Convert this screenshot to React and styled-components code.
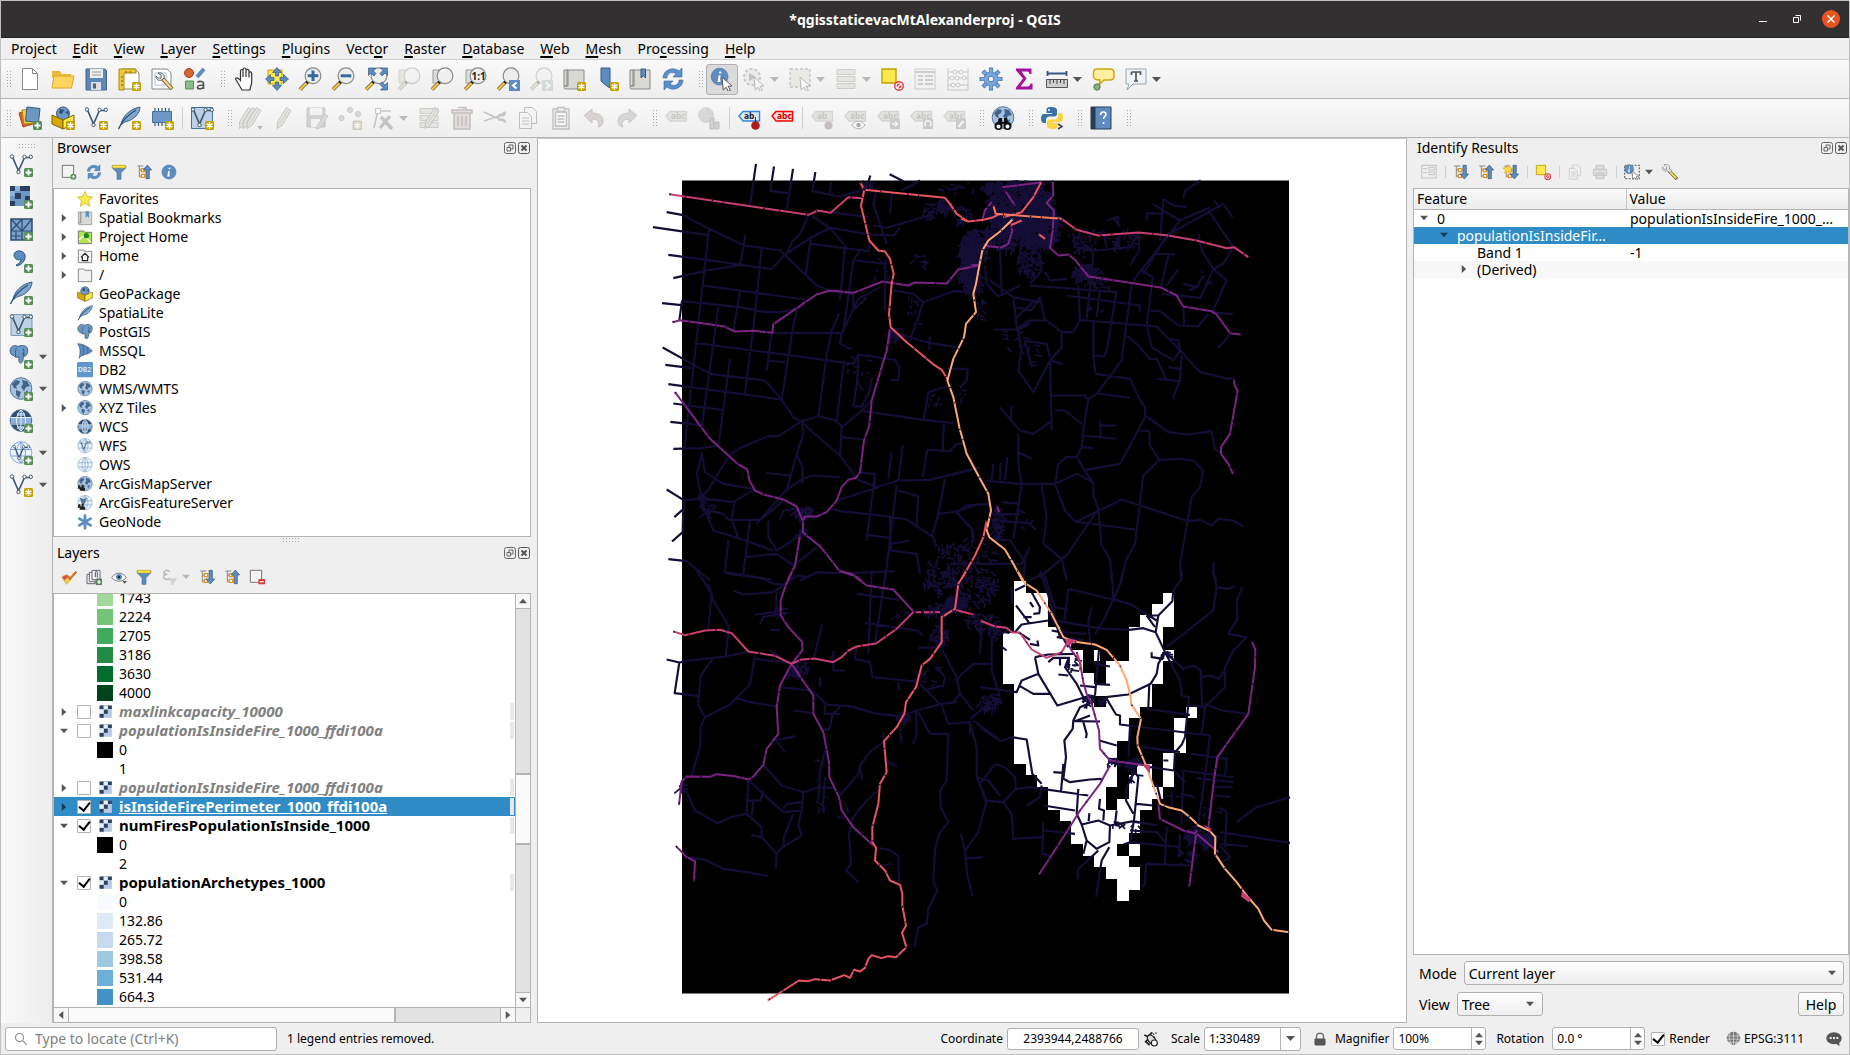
import React from 'react';
import styled, { createGlobalStyle, css } from 'styled-components';

const Global = createGlobalStyle`
  * { box-sizing: border-box; }
  body { margin: 0; background: #efefef; }
  body, button, input, select, table {
    font-family: "Noto Sans", "Open Sans", sans-serif;
    font-size: 14px;
    color: #000;
  }
  ul { list-style: none; margin: 0; padding: 0; }
  button { padding: 0; border: 0; background: none; }
`;

/* ---------- window frame ---------- */

const Window = styled.div`
  height: 100vh;
  display: flex;
  flex-direction: column;
  border: 1px solid #bfbfbf;
  background: #efefef;
  overflow: hidden;
`;

const TitleBar = styled.header`
  flex: none;
  height: 37px;
  display: grid;
  grid-template-columns: 1fr auto 1fr;
  align-items: center;
  background: #323030;
  border-bottom: 1px solid #1f1f1f;
`;

const WindowTitle = styled.h1`
  grid-column: 2;
  margin: 0;
  font-size: 14px;
  font-weight: 700;
  color: #fff;
`;

const WindowButtons = styled.div`
  display: flex;
  justify-content: flex-end;
  align-items: center;
  gap: 16px;
  padding-right: 9px;
`;

const WindowButton = styled.button`
  width: 18px;
  height: 18px;
  display: grid;
  place-items: center;
  border-radius: 9px;
  background: ${(p) => (p.$close ? '#e95420' : 'transparent')};
`;

const MenuBar = styled.nav`
  flex: none;
  height: 22px;
  display: flex;
  align-items: center;
  padding-left: 2px;
  border-bottom: 1px solid #d0d0d0;
`;

const MenuItem = styled.button`
  padding: 0 8px;
  line-height: 20px;
  u { text-decoration-thickness: 2px; text-underline-offset: 2px; }
`;

/* ---------- toolbars ---------- */

const Toolbar = styled.div`
  flex: none;
  height: 39px;
  display: flex;
  align-items: center;
  padding-left: 3px;
  border-bottom: 1px solid #b4b4b4;
  background: linear-gradient(#f9f9f9, #eeeeee);
`;

const Group = styled.div`
  display: flex;
  align-items: center;
  margin-right: 6px;
`;

const Grip = styled.span`
  flex: none;
  width: 10px;
  height: 18px;
  background: radial-gradient(circle, #a9a9a9 0 1px, transparent 1px) 2px 0 / 3px 3px;
  background-clip: content-box;
  padding: 0 2px;
  ${(p) => p.$wide && css`width: 18px; height: 6px; padding: 0;`}
`;

const Separator = styled.span`
  flex: none;
  width: 1px;
  height: ${(p) => (p.$small ? '12px' : '22px')};
  margin: 0 3px;
  background: #d0d0d0;
`;

const ToolButton = styled.button`
  flex: none;
  width: ${(p) => (p.$menu ? '46px' : '33px')};
  height: 31px;
  display: flex;
  align-items: center;
  gap: 4px;
  padding-left: 4px;
  border-radius: 3px;
  ${(p) => p.$pressed && css`
    width: 32px;
    padding-left: 3px;
    border: 1px solid #b0b0b0;
    background: #dadada;
  `}
  &:disabled { opacity: 0.36; filter: grayscale(0.7); }
`;

const SideBar = styled.div`
  flex: none;
  width: 52px;
  display: flex;
  flex-direction: column;
  padding: 5px 0 0 5px;
  border-right: 1px solid #b4b4b4;
  background: linear-gradient(90deg, #f9f9f9, #ededed);
`;

const SideGrip = styled.div`
  height: 6px;
  padding-left: 13px;
  display: flex;
`;

const SideButton = styled.button`
  width: 44px;
  height: 32px;
  display: flex;
  align-items: center;
  gap: 6px;
  padding-left: 3px;
`;

const SmallButton = styled.button`
  flex: none;
  width: ${(p) => (p.$menu ? '38px' : '25px')};
  height: 24px;
  display: flex;
  align-items: center;
  gap: 5px;
  padding-left: 4px;
  &:disabled { opacity: 0.35; filter: grayscale(1); }
`;

/* ---------- docks ---------- */

const Main = styled.main`
  flex: 1;
  min-height: 0;
  display: flex;
`;

const LeftDocks = styled.div`
  flex: none;
  width: 484px;
  display: flex;
  flex-direction: column;
  padding-right: 6px;
`;

const RightDock = styled.section`
  flex: none;
  width: 442px;
  display: flex;
  flex-direction: column;
  padding-left: 6px;
`;

const Dock = styled.section`
  display: flex;
  flex-direction: column;
  flex: ${(p) => (p.$grow ? '1' : 'none')};
  min-height: 0;
`;

const DockTitle = styled.div`
  flex: none;
  height: 20px;
  display: flex;
  align-items: center;
  padding: 0 ${(p) => (p.$edge ? '2px' : '1px')} 0 4px;
  gap: 2px;
  h2 { flex: 1; margin: 0; font-size: 14px; font-weight: 400; line-height: 20px; }
`;

const DockTools = styled.div`
  flex: none;
  height: 30px;
  display: flex;
  align-items: center;
  padding: 0 0 2px 4px;
`;

const Splitter = styled.div`
  flex: none;
  height: 6px;
  display: flex;
  justify-content: center;
`;

const Panel = styled.div`
  border: 1px solid #b4b4b4;
  background: #fff;
  min-height: 0;
  overflow: hidden;
  ${(p) => p.$grow && css`flex: 1;`}
  ${(p) => p.$pad && css`padding-bottom: 5px;`}
`;

const LayerPanel = styled(Panel)`
  display: grid;
  grid-template-columns: 1fr 15px;
  grid-template-rows: 1fr 15px;
`;

const LayerTree = styled.ul`
  overflow: hidden;
  min-height: 0;
  display: flex;
  flex-direction: column;
  justify-content: flex-start;
  > li:first-child { margin-top: -6px; }
`;

const Row = styled.li`
  flex: none;
  height: 19px;
  display: flex;
  align-items: center;
  padding-left: ${(p) => (p.$legend ? '43px' : '6px')};
  gap: ${(p) => (p.$legend ? '6px' : '0')};
  line-height: 19px;
  background: ${(p) => (p.$selected ? '#308cc6' : 'transparent')};
  white-space: nowrap;
`;

const ArrowSlot = styled.span`
  flex: none;
  width: 8px;
  margin-right: 9px;
  display: grid;
  place-items: center;
`;

const RowIcon = styled.span`
  flex: none;
  display: grid;
  width: ${(p) => (p.$layer ? '14px' : '16px')};
  margin-right: 6px;
`;

const Swatch = styled.span`
  width: 16px;
  height: 16px;
  background: ${(p) => p.$color};
`;

const CheckBox = styled.input.attrs({ type: 'checkbox' })`
  appearance: none;
  flex: none;
  width: 14px;
  height: 14px;
  margin: 0 8px 0 0;
  border: 1px solid #b4b4b4;
  border-radius: 1px;
  background: #fff;
  display: grid;
  place-items: center;
  &:checked::before {
    content: "";
    width: 5px;
    height: 9px;
    border: solid #000;
    border-width: 0 2px 2px 0;
    transform: translateY(-1px) rotate(38deg);
  }
`;

const LayerLabel = styled.label`
  flex: 1;
  font-size: 15px;
  font-weight: 700;
  font-style: ${(p) => (p.$off ? 'italic' : 'normal')};
  color: ${(p) => (p.$off ? '#808080' : p.$selected ? '#fff' : '#000')};
  text-decoration: ${(p) => (p.$selected ? 'underline' : 'none')};
`;

const Indicator = styled.span`
  width: 4px;
  height: 17px;
  margin-right: 1px;
  background: #e8e8e8;
`;

const ScrollV = styled.div`
  border-left: 1px solid #b4b4b4;
  display: flex;
  flex-direction: column;
  background: #e2e2e2;
`;

const ScrollH = styled.div`
  border-top: 1px solid #b4b4b4;
  display: flex;
  background: #e2e2e2;
`;

const ScrollEnd = styled.button`
  flex: none;
  width: 14px;
  height: 14px;
  display: grid;
  place-items: center;
  background: #f7f7f7;
`;

const ScrollTrack = styled.div`
  flex: ${(p) => p.$share} 1 0;
  border: 0 solid #b4b4b4;
  border-width: ${(p) => (p.$vertical ? '1px 0' : '0 1px')};
  background: ${(p) => (p.$thumb ? '#fafafa' : '#e2e2e2')};
`;

const Corner = styled.div`
  border: solid #b4b4b4;
  border-width: 1px 0 0 1px;
  background: #efefef;
`;

/* ---------- map ---------- */

const Canvas = styled.section`
  flex: 1;
  min-width: 0;
  border: 1px solid #b4b4b4;
  border-top-color: #c4c4c4;
  background: #fff;
  display: flex;
  svg { flex: 1; min-width: 0; height: 100%; }
`;

/* ---------- identify results ---------- */

const Results = styled.table`
  width: 100%;
  border-collapse: collapse;
  table-layout: fixed;
  th {
    height: 20px;
    padding: 0 3px;
    text-align: left;
    font-weight: 400;
    line-height: 19px;
    border-bottom: 1px solid #b4b4b4;
    background: linear-gradient(#fafafa, #ececec);
  }
  th + th { border-left: 1px solid #c4c4c4; }
  td { height: 17px; padding: 0 0 0 4px; line-height: 17px; white-space: nowrap; }
`;

const ResultRow = styled.tr`
  background: ${(p) => (p.$selected ? '#308cc6' : p.$alt ? '#f7f7f7' : '#fff')};
  td { color: ${(p) => (p.$selected ? '#fff' : '#000')}; }
`;

const TreeCell = styled.div`
  display: flex;
  align-items: center;
  gap: 9px;
  padding-left: ${(p) => p.$depth * 20 + 2}px;
`;

const Form = styled.div`
  flex: none;
  display: flex;
  flex-direction: column;
  gap: 7px;
  padding: 6px 5px 7px 6px;
`;

const FormRow = styled.div`
  display: flex;
  align-items: center;
  justify-content: space-between;
  gap: 7px;
`;

const Field = styled.span`
  display: flex;
  align-items: center;
  gap: 7px;
  flex: ${(p) => (p.$grow ? '1' : 'none')};
`;

const SelectBox = styled.span`
  display: grid;
  grid-template-columns: 1fr auto;
  align-items: center;
  height: 24px;
  width: ${(p) => p.$width || '100%'};
  border: 1px solid #b0b0b0;
  border-radius: 3px;
  background: ${(p) => (p.$edit ? '#fff' : 'linear-gradient(#fefefe, #eeeeee)')};
  > select {
    grid-area: 1 / 1 / 2 / 3;
    appearance: none;
    border: 0;
    background: none;
    padding: 0 4px;
    width: 100%;
    font-size: ${(p) => (p.$edit ? '12px' : '14px')};
  }
  > span {
    grid-area: 1 / 2;
    height: 22px;
    display: grid;
    place-items: center;
    width: ${(p) => (p.$edit ? '20px' : '23px')};
    border-left: ${(p) => (p.$edit ? '1px solid #b4b4b4' : '0')};
    pointer-events: none;
  }
`;

const PushButton = styled.button`
  width: 46px;
  height: 24px;
  border: 1px solid #b0b0b0;
  border-radius: 3px;
  background: linear-gradient(#fefefe, #eeeeee);
`;

/* ---------- status bar ---------- */

const StatusBar = styled.footer`
  flex: none;
  height: 31px;
  display: flex;
  align-items: center;
  padding: 0 7px 0 4px;
  font-size: 12px;
  label, output { white-space: nowrap; font-size: 12px; }
`;

const Locator = styled.label`
  width: 272px;
  height: 24px;
  display: flex;
  align-items: center;
  gap: 7px;
  padding: 0 8px;
  border: 1px solid #b0b0b0;
  border-radius: 3px;
  background: #fff;
  input { flex: 1; min-width: 0; padding: 0; border: 0; outline: 0; background: none; }
  input::placeholder { color: #808080; }
`;

const Message = styled.output`
  flex: 1;
  padding-left: 10px;
`;

const StatusItem = styled.span`
  display: flex;
  align-items: center;
  gap: ${(p) => p.$gap || 4}px;
  margin-left: ${(p) => p.$before || 10}px;
`;

const StatusInput = styled.input`
  width: ${(p) => p.$width};
  height: 22px;
  padding: 0 4px;
  border: 1px solid #b0b0b0;
  border-radius: 3px;
  background: #fff;
  font-size: 12px;
  text-align: ${(p) => (p.$center ? 'center' : 'left')};
`;

const Spin = styled.span`
  display: flex;
  width: 93px;
  height: 23px;
  border: 1px solid #b0b0b0;
  border-radius: 3px;
  background: #fff;
  input { flex: 1; min-width: 0; border: 0; padding: 0 4px; background: none; font-size: 12px; }
`;

const SpinButtons = styled.span`
  width: 14px;
  border-left: 1px solid #b4b4b4;
  display: flex;
  flex-direction: column;
  justify-content: center;
  align-items: center;
  button { display: grid; }
`;

const StatusCheck = styled(CheckBox)`
  margin: 0;
`;

const StatusButton = styled.button`
  display: flex;
  align-items: center;
  gap: 3px;
  font-size: 12px;
  margin-left: ${(p) => p.$before || 0}px;
`;

/* ---------- icons ---------- */

const Plus = () => (
  <g>
    <rect x="15" y="15" width="9" height="9" rx="1.5" fill="#5a8c5a" />
    <path d="M19.500 16.500v6M16.500 19.500h6" stroke="#fff" strokeWidth="1.800" />
  </g>
);
const Gold = () => (
  <g>
    <rect x="15" y="15" width="9" height="9" rx="1.500" fill="#c4a000" />
    <path d="M19.500 16.200v6.600M16.600 17.800l5.800 3.400M22.400 17.800l-5.800 3.400" stroke="#fff" strokeWidth="1.500" />
  </g>
);
const Lens = ({ children }) => (
  <g>
    <path d="M9.500 15 2 22.500" stroke="#555" strokeWidth="3.600" />
    <path d="M8.800 15.700 2 22.500" stroke="#fcc92f" strokeWidth="2.200" />
    <path d="M11 13.500 8.500 16" stroke="#111" strokeWidth="3" />
    <circle cx="15" cy="8.800" r="7.900" fill="#eeeeec" stroke="#888a85" strokeWidth="1.200" />
    {children}
  </g>
);
const Vee = () => (
  <g stroke="#41586e" fill="none">
    <path d="M3.500 4 9.500 18 15.500 4.500H22" strokeWidth="1.700" />
    <g fill="#fff" strokeWidth="1"><circle cx="3" cy="3.500" r="1.700" /><circle cx="9.500" cy="19" r="1.700" /><circle cx="15.500" cy="3.800" r="1.700" /><circle cx="21.800" cy="3.800" r="1.700" /></g>
  </g>
);
const Feather = () => (
  <g>
    <path d="M4 19C5 11 12 3 23 1c0 6-6 13-14 14.500C7 16.500 5 18 4 19z" fill="#7fa6cf" stroke="#3b5f86" />
    <path d="M1.500 23C5 15 12 8 19 4" stroke="#2e4e72" fill="none" strokeWidth="1.400" />
  </g>
);
const Globe = ({ dark, pale }) => (
  <g>
    <circle cx="12" cy="11.500" r="10.800" fill={dark ? '#2e4e72' : pale ? '#eef4fb' : '#a9c3de'} stroke={pale ? '#8aaed6' : '#54779c'} />
    {dark || pale ? (
      <g>
        {dark && <path d="M2 9h20v5H2zM8 4h8v3H8zM8 17h8v3H8z" fill="#8cb1dc" />}
        <path d="M1.500 8.500h21M1.500 15h21M12 1v21M12 1C6 6 6 17 12 22M12 1c6 5 6 16 0 21" stroke={dark ? '#e8f0f8' : '#78a3d4'} fill="none" />
      </g>
    ) : (
      <path d="M3 7l4-4 4 1-1 3-3 2 1 3-3-1zM13 3l5 1 3 5-4 1-2 4-3-4 2-3zM7 13l5 2-2 6-3-3zM15 16l4-3-1 5z" fill="#41658c" />
    )}
  </g>
);
const Page = () => <path d="M4.500 1.500h10l5 5v16h-15zM14.500 1.500v5h5" fill="#fff" stroke="#888a85" />;
const Tag = ({ fill = '#c9c7b0', line = '#a3a08a', ink = '#77756a', text = 'abc' }) => (
  <g>
    <path d="M2 10 6 5.500H22.500V15H6z" fill={fill} stroke={line} strokeWidth="1.400" />
    <text x="7" y="13" fontSize="8.500" fontWeight="700" fill={ink} fontFamily="Noto Sans, sans-serif">{text}</text>
  </g>
);
const Pencil = ({ x = 0 }) => (
  <g transform={`translate(${x} 0)`}>
    <path d="M4.500 16 13.500 1.500l4.500 3L9 19.500 4 22.500z" fill="#cfc898" stroke="#77756a" />
    <path d="M6.500 18 15.500 3.500" stroke="#888" />
  </g>
);
const Scissors = () => <path d="M1 6l15 7M1 15l15-5M22 6l-8 6 9 4M16 8a3 2.500 0 1 0 6-2M16 15a3 2.500 0 1 1 6 2" fill="none" stroke="#777" strokeWidth="1.800" />;
const TreeMark = () => (
  <g><path d="M2 3h9M5 3v17M5 9h5M5 18h5" stroke="#888" strokeWidth="1.500" fill="none" /><path d="M8 7h5v4.500H8zM8 15.500h5V20H8z" fill="#fff" stroke="#e8941a" strokeWidth="2" /></g>
);
const Up = () => <path d="M17 1.500 23.500 9H20v13h-5V9h-4.500z" fill="#5c8cc0" stroke="#34587f" />;
const Down = () => <path d="M17 22.500 23.500 15H20V2h-5v13h-4.500z" fill="#5c8cc0" stroke="#34587f" />;
const Cursor = () => <path d="M12 10l10 9-4 .3 2.500 4-2.300 1-2-4-3 2.700z" fill="#fff" stroke="#555" />;
const Elephant = () => (
  <g><path d="M2 4C4 0 9 0 11 2c3-2 8-2 11 1 2 4 0 10-3 11-1-1-1-3-1-4l-1 9c-1 4-5 4-5 0v-5c-2 2-5 1-6-1C3 13 0 9 2 4z" fill="#6d97c4" stroke="#2e4e72" /><path d="M9 4c-2 4-1 7-1 10M17 4c2 3 1 5 0 8" stroke="#2e4e72" fill="none" /></g>
);
const Box3D = () => (
  <g>
    <circle cx="12" cy="7.500" r="6.500" fill="#6d97c4" stroke="#34587f" /><path d="M9 3l4 1-2 4-3-1zM14 6l3-1 1 4z" fill="#2e4e72" />
    <path d="M1 9l11 5v9L1 18z" fill="#d9a900" stroke="#7c6300" /><path d="M23 9l-11 5v9l11-5z" fill="#fce94f" stroke="#7c6300" />
  </g>
);
const Blocked = () => <g><circle cx="19" cy="19" r="5" fill="#e0393e" /><circle cx="19" cy="19" r="3" fill="none" stroke="#fff" strokeWidth="1.200" /><path d="M17 21l4-4" stroke="#fff" strokeWidth="1.300" /></g>;
const Book = () => <g><path d="M2 3h4v16H2zM5 3h17v19H4c-3 0-3-3 0-3h1z" fill="#d8d8d4" stroke="#888a85" /></g>;
const Sync = () => (
  <g fill="#5a8fcb" stroke="#3a68a0" strokeWidth=".6"><path d="M2 11C2 3 12-1 18 4l3-3v9h-9l3-3C11 4 6 6 6 11z" /><path d="M22 13c0 8-10 12-16 7l-3 3v-9h9l-3 3c4 3 9 1 9-4z" /></g>
);
const Info = () => <g><circle cx="12" cy="12" r="10.500" fill="#5c8cc0" stroke="#4a78ab" /><path d="M12.800 5.500v2.500M12 10.500l-1 7h2" stroke="#fff" strokeWidth="2.600" fill="none" /></g>;
const Stack = () => <path d="M3 2.500h18v5H3zM3 9.500h18v5H3zM3 16.500h18v5H3z" fill="#cfcca8" stroke="#8f8c78" />;
const Raster = () => (
  <g><rect x="1" y="1" width="20" height="20" fill="#6d97c4" /><path d="M1 1h5v5H1zM11 1h10v5H11zM11 6h0v5h0zM6 8h6v6H6zM1 16h5v5H1zM16 11h5v5h-5z" fill="#2b4060" /><path d="M6 1h5v5H6zM1 6h5v5H1z" fill="#8fb3da" /></g>
);
const Funnel = () => <g><path d="M2 3h20v3l-7 7v10H9V13L2 6z" fill="#5c8cc0" stroke="#46709d" /><path d="M2 2h20v4H2z" fill="#fce94f" stroke="#b79b10" /></g>;
const Wrench = () => <g><path d="M10 10 22.500 22.500" stroke="#665c20" strokeWidth="5" /><path d="M12 12 21.500 21.500" stroke="#f0dc62" strokeWidth="3" /><path d="M3 1l4 4v3H4L0 4c0 5 3 8 8 6l4 3 3-3-4-2c2-5-3-9-8-7z" fill="#eee" stroke="#777" /></g>;
const Eye = () => <g><path d="M1 13C6 4 18 4 23 13 18 20 6 20 1 13z" fill="#f2f2f2" stroke="#888" strokeWidth="1.500" /><circle cx="12" cy="12" r="4.500" fill="#5c8cc0" /><circle cx="12" cy="12" r="2" fill="#1d2c3c" /></g>;

const ICONS = {
  newDoc: <Page />,
  open: <g><path d="M1 4h8l2 3h9v4H1z" fill="#e9b93c" /><path d="M1 21 3 9h20l-2.500 12z" fill="#fcd560" stroke="#dfa726" /></g>,
  save: <g><path d="M2 2h19l1.500 1.500V23H2z" fill="#5c87b8" stroke="#41658c" /><path d="M6 2h13v9H6z" fill="#eee" /><path d="M8 5h9M8 8h9" stroke="#999" /><path d="M7 15h10v8H7z" fill="#ddd" /><path d="M9 16.500h3v5H9z" fill="#41658c" /></g>,
  layout: <g><path d="M5 2h13l4 4v16H5z" fill="#fff" stroke="#888a85" /><path d="M2 2h17v4H7v17H2z" fill="#f0c83a" stroke="#a88a10" /><path d="M9 4v2M13 4v2M4 10h2M4 14h2M4 18h2" stroke="#6b5a10" /><Gold /></g>,
  layoutMgr: <g><path d="M2 2h15l4 4v16H2z" fill="#fff" stroke="#888a85" /><path d="M5 6h11v12H5z" fill="none" stroke="#a9c2e8" /><path d="M12 11l10 11" stroke="#665c20" strokeWidth="4" /><path d="M13 12l8.500 9.500" stroke="#f0d890" strokeWidth="2.400" /><path d="M8 6l3 2v3H8L6 9c0 4 3 5 6 4l2-2c1-3-2-6-6-5z" fill="#eee" stroke="#666" /></g>,
  style: <g><circle cx="6" cy="6" r="4.500" fill="#d4662f" stroke="#a34418" /><path d="M14 10 21 2" stroke="#5c8cc0" strokeWidth="4" /><path d="M2.500 14h8v8h-8z" fill="#8bbd8b" stroke="#5a8c5a" /><path d="M14.500 15.500c1-1.500 6-1.500 6 1V22M20.500 18c-3 0-6 0-6 2.200s4 2.200 6 0" fill="none" stroke="#555" strokeWidth="1.700" /></g>,
  hand: <path d="M8 23 4 16 1.500 12c1-2 3-1 5 1.500V4c0-2 2.500-2 2.500 0V2.500c0-2 3-2 3 0V3.500c0-1.500 3-1.500 3 .5v2c0-1.500 2.700-1.500 2.700.5V15c0 3-1.700 5-1.700 8z M9 4v6M12 3.500v6.500M15 6v4.500" fill="#fff" stroke="#333" strokeWidth="1.200" transform="translate(2 0)" />,
  panSel: <g><path d="M3 3h14v14H3z" fill="#fce94f" stroke="#c4a000" /><g fill="#5c8cc0" stroke="#34587f" strokeWidth=".7"><path d="M12 .5l4.500 5h-3v3.500h-3V5.500h-3zM12 23.500l4.500-5h-3V15h-3v3.500h-3zM.5 12l5-4.500v3H9v3H5.500v3zM23.500 12l-5-4.500v3H15v3h3.500v3z" /></g></g>,
  zoomIn: <Lens><path d="M15 3.500v10.600M9.700 8.800h10.600" stroke="#34689f" strokeWidth="3" /></Lens>,
  zoomOut: <Lens><path d="M9.700 8.800h10.600" stroke="#34689f" strokeWidth="3" /></Lens>,
  zoomFull: <g><Lens /><path d="M4.500 1h7L9 3.500l3 3L10 9 7 6 4.500 8.500zM23.500 1h-7l2.500 2.500-3 3L18 9l3-3 2.500 2.500zM23.500 23h-7l2.500-2.500-3-3 2-2.500 3 3 2.500-2.500z" fill="#5c8cc0" stroke="#34587f" strokeWidth=".7" /></g>,
  zoomSel: <g><path d="M2 3h13v13H2z" fill="#d8cf8a" stroke="#a09860" /><Lens /></g>,
  zoomLayer: <g><path d="M3 3h12v13H3z" fill="#ddd" stroke="#999" /><Lens><path d="M11 5c1-2 3-2 5-2" stroke="#fff" strokeWidth="2" fill="none" /></Lens></g>,
  zoomNative: <g><path d="M3 3h12v13H3z" fill="#ddd" stroke="#999" /><Lens><text x="8.500" y="12.500" fontSize="10" fontWeight="700" fill="#222" fontFamily="Noto Sans, sans-serif">1:1</text></Lens></g>,
  zoomLast: <g><Lens /><rect x="13" y="13" width="11" height="11" fill="#5c8cc0" /><path d="M20.500 15.500 17 18.500l3.500 3" stroke="#fff" strokeWidth="2" fill="none" /></g>,
  zoomNext: <g><Lens /><rect x="13" y="13" width="11" height="11" fill="#8ba" /><path d="M17 15.500l3.500 3-3.500 3" stroke="#fff" strokeWidth="2" fill="none" /></g>,
  newMap: <g><Book /><Gold /></g>,
  newMark: <g><path d="M6 1h9v20l-4.500-3L6 14z" fill="#5c8cc0" stroke="#34587f" /><Gold /></g>,
  marks: <g><Book /><path d="M13 2h4.500v9l-2-2.500L13 11z" fill="#5c8cc0" stroke="#34587f" /></g>,
  refresh: <Sync />,
  identify: <g><g transform="scale(.8)"><Info /></g><Cursor /></g>,
  action: <g><circle cx="10" cy="10" r="8" fill="#ddd" stroke="#777" strokeWidth="2" strokeDasharray="3 2" /><path d="M7 5.500v9l7-4.500z" fill="#777" /><Cursor /></g>,
  select: <g><path d="M2 2h20v18H2z" fill="#ddd8ae" stroke="#777" strokeWidth="1.400" strokeDasharray="3 2" /><Cursor /></g>,
  selectVal: <Stack />,
  deselect: <g><path d="M2 2h14v14H2z" fill="#fce94f" stroke="#c4a000" strokeWidth="1.400" /><Blocked /></g>,
  table: <g><path d="M2 2h20v20H2z" fill="#eee" stroke="#888" /><path d="M2 5h20M5 9h5M12 9h8M5 13h5M12 13h8M5 17h5M12 17h8" stroke="#888" strokeWidth="1.800" /></g>,
  calc: <g fill="#fff" stroke="#777"><path d="M2 1v22h20V1M2 5h20M2 11h20M2 18h20" fill="none" /><circle cx="9" cy="5" r="2" /><circle cx="15" cy="5" r="2" /><circle cx="6" cy="11" r="2" /><circle cx="11" cy="11" r="2" /><circle cx="18" cy="11" r="2" /><circle cx="7" cy="18" r="2" /><circle cx="12" cy="18" r="2" /></g>,
  gear: <g><path d="M12 .5v23M.5 12h23M3.900 3.900l16.200 16.200M20.100 3.900 3.900 20.100" stroke="#4a7fbe" strokeWidth="4.200" /><path d="M12 1.500v21M1.500 12h21M4.600 4.600l14.800 14.800M19.400 4.600 4.600 19.400" stroke="#7ba6da" strokeWidth="2.600" /><circle cx="12" cy="12" r="7" fill="#7ba6da" stroke="#4a7fbe" /><path d="M12 3v18M3 12h18" stroke="#7ba6da" strokeWidth="2.600" /><circle cx="12" cy="12" r="2.800" fill="#f4f4f4" stroke="#4a7fbe" /></g>,
  sum: <path d="M4 1.500h15.500V7h-2c-.5-2-1-2.500-3-2.500H9.500l5 7-6 8h7c2 0 2.500-1 3-3h2V22.500H4v-2l7-9-7-8z" fill="#a6129c" />,
  measure: <g><path d="M2 6.500h20M2.500 4v5M21.500 4v5" stroke="#34587f" strokeWidth="1.800" /><path d="M1.500 12.500h21v8h-21z" fill="#cfcfcf" stroke="#555" /><path d="M5 13v4M8.500 13v3M12 13v4M15.500 13v3M19 13v4" stroke="#444" /></g>,
  tips: <g><path d="M6 2h13c3 0 4 1.500 4 4v3c0 3-1 4-4 4h-6l-5 5 1-5C4 13 2.500 12 2.500 9V6C2.500 3 4 2 6 2z" fill="#fdf0a0" stroke="#c9a40c" strokeWidth="1.500" /><circle cx="6" cy="20" r="3.200" fill="#7db47d" stroke="#5a7a5a" /></g>,
  textNote: <g><path d="M2 2h20v15H9l-6 6 2-6H2z" fill="#eef3f9" stroke="#9aa" /><path d="M7.500 5h9v3M7.500 8V5M12 5v9M10 14h4" stroke="#555" strokeWidth="1.700" fill="none" /></g>,
  sources: <g><path d="M1 7l10-3 4 14-10 3z" fill="#d4662f" stroke="#a34418" /><path d="M4 4l11-1 2 14-11 1z" fill="#f6cf3c" stroke="#b08a10" /><path d="M9 1l13 1.500-1.500 14-13-1.500z" fill="#6d97c4" stroke="#34587f" /><Plus /></g>,
  newGpkg: <g><Box3D /><Gold /></g>,
  newShape: <g><Vee /><Gold /></g>,
  newSpatial: <g><Feather /><Gold /></g>,
  newMem: <g><path d="M5 2v18M8.500 2v18M12 2v18M15.500 2v18M19 2v18" stroke="#34587f" strokeWidth="1.200" /><path d="M2.500 5.500h19v11h-19z" fill="#6d97c4" stroke="#46709d" /><Gold /></g>,
  newVirt: <g><path d="M1.500 1.500h21v21h-21z" fill="#bcd0e6" stroke="#46709d" /><Vee /><Gold /></g>,
  edits: <g><Pencil x={-4} /><Pencil x={0} /><Pencil x={4} /><path d="M18 20h6l-3 3.500z" fill="#555" /></g>,
  edit: <Pencil x={1} />,
  saveEdits: <g><path d="M2 2h18v19H2z" fill="#999" stroke="#777" /><path d="M5 2h12v7H5zM6 13h9v8H6z" fill="#eee" /><path d="M12 20l8-12 3 2-8 12-4 1z" fill="#d9a090" stroke="#888" /></g>,
  addPt: <g fill="#aaa" stroke="#777"><circle cx="12" cy="4" r="2.500" /><circle cx="3.500" cy="12" r="2.500" /><circle cx="20" cy="8" r="2.500" /><Gold /></g>,
  vertex: <g><path d="M3 22 7 4M7 5h13" stroke="#777" strokeWidth="1.600" /><path d="M4.500 2.500h5v5h-5z" fill="#fff" stroke="#777" /><path d="M10 11l11 12M19 10 9 22" stroke="#77756a" strokeWidth="3.500" /></g>,
  multi: <g><Stack /><Pencil x={4} /></g>,
  trash: <path d="M2 4h20v3H2zM8 1.500h8V4M4 7h16v16H4zM8 10v10M12 10v10M16 10v10" fill="#d9b0a8" stroke="#a05a50" strokeWidth="1.500" />,
  cut: <Scissors />,
  copy: <g fill="#f4f4f4" stroke="#666"><path d="M8.500 1.500h8l4 4v12h-12z" /><path d="M3.500 6.500h8l4 4v12h-12zM6 12h7M6 15h7M6 18h7" /></g>,
  paste: <g fill="#e6e6e6" stroke="#666" strokeWidth="1.300"><path d="M4 3h16v20H4z" /><path d="M6.500 6h11v14h-11z" fill="#fff" /><path d="M8.500 1.500h7v4h-7zM8.500 10h7M8.500 13h7M8.500 16h7" /></g>,
  undo: <path d="M2 9.500 10 3v4c7 0 11 3 11 8 0 3-2 6-5 6 2-5 0-8-6-8v4z" fill="#c49080" stroke="#97695c" />,
  redo: <path d="M22 9.500 14 3v4C7 7 3 10 3 15c0 3 2 6 5 6-2-5 0-8 6-8v4z" fill="#9aa890" stroke="#778070" />,
  label: <Tag />,
  diagram: <g><circle cx="9" cy="9" r="7.500" fill="#b0a8a0" stroke="#8a8" /><path d="M9 9V1.500A7.500 7.500 0 0 1 16 9z" fill="#8aa58a" /><path d="M13 12h4v11h-4zM18 16h4v7h-4z" fill="#999" stroke="#666" /></g>,
  labelPin: <g><Tag fill="#dcebfa" line="#3584d9" ink="#222" text="ab" /><circle cx="18.500" cy="19.500" r="4.300" fill="#b01818" /><path d="M18.500 16v-5" stroke="#333" /></g>,
  labelRed: <Tag fill="#f8d8d8" line="#f00" ink="#c00" />,
  labelPin2: <g><Tag text="ab" /><circle cx="18.500" cy="19.500" r="4" fill="#a06060" /></g>,
  labelEye: <g><Tag /><path d="M9 19c3-5 10-5 13 0-3 5-10 5-13 0z" fill="#fff" stroke="#444" /><circle cx="15.500" cy="19" r="2.200" fill="#333" /></g>,
  labelMove: <g><Tag /><rect x="14" y="13" width="10" height="10" fill="#888" /><path d="M16 18h5M19 15.500l2.500 2.500-2.500 2.500" stroke="#fff" strokeWidth="1.500" fill="none" /></g>,
  labelTurn: <g><Tag /><rect x="14" y="13" width="10" height="10" fill="#888" /><path d="M17 20a3 3 0 1 1 4 0" stroke="#fff" strokeWidth="1.500" fill="none" /></g>,
  labelEdit: <g><Tag /><rect x="14" y="13" width="10" height="10" fill="#888" /><path d="M16.500 21l5-6" stroke="#fff" strokeWidth="2" /></g>,
  metaSearch: <g><Globe /><g fill="#111"><circle cx="7.500" cy="20" r="4" /><circle cx="16.500" cy="20" r="4" /><path d="M6 18l2-6h3v4h2v-4h3l2 6z" /></g><circle cx="7.500" cy="20.500" r="2" fill="#fff" /><circle cx="16.500" cy="20.500" r="2" fill="#fff" /></g>,
  python: <g><path d="M11 1C7 1 6.500 2.500 6.500 4v3H12v1H4C2 8 1 10 1 12.500S2 17 4 17h2v-3c0-2 1.500-3.500 3.500-3.500h5c1.500 0 2.500-1 2.500-2.500V4c0-2-2-3-6-3z" fill="#3772a4" /><path d="M13 23c4 0 4.500-1.500 4.500-3v-3H12v-1h8c2 0 3-2 3-4.500S22 7 20 7h-2v3c0 2-1.500 3.500-3.500 3.500h-5C8 13.500 7 14.500 7 16v4c0 2 2 3 6 3z" fill="#ffd343" /><circle cx="9" cy="4" r="1" fill="#fff" /><path d="M18 18l4 2.500-4 2.500" stroke="#444" strokeWidth="1.500" fill="none" /></g>,
  help: <g><path d="M2 1h20v22H2z" fill="#5c8cc0" stroke="#2b3c50" /><path d="M2 1h4.500v22H2z" fill="#2b3c50" /><path d="M11.500 9c0-4 6-4 5.500-.5-.3 2-2.500 2-2.500 4.500M14.500 16v2" stroke="#fff" strokeWidth="1.600" fill="none" /></g>,
  addVec: <g><Vee /><Plus /></g>,
  addRas: <g><Raster /><Plus /></g>,
  addMesh: <g><path d="M2 2h21v21H2z" fill="#7ba0ca" stroke="#2e4e72" strokeWidth="1.500" /><path d="M2 14h21M13 2v21M2 2l11 12M13 2 2 14M23 2 13 14M7 14v9M2 19h11" stroke="#2e4e72" strokeWidth="1.200" /><Plus /></g>,
  addCsv: <g><path d="M5 6c0-5 9-6 11 0 1 6-4 10-8 11l-1-1c3-1 5-3 5-6-3 2-7 0-7-4z" fill="#5c8cc0" stroke="#34587f" /><Plus /></g>,
  addSpl: <g><Feather /><Plus /></g>,
  addVirt: <g><path d="M2 1.500h21v21H2z" fill="#bcd0e6" stroke="#7b9cc0" /><Vee /><Plus /></g>,
  addPg: <g><g transform="scale(.82)"><Elephant /></g><Plus /></g>,
  addWms: <g><Globe /><Plus /></g>,
  addWcs: <g><Globe dark /><Plus /></g>,
  addWfs: <g><Globe pale /><g transform="translate(3 3) scale(.75)"><Vee /></g><Plus /></g>,
  addLayer: <g><path d="M2 2h17v18H2z" fill="#f4f4f4" stroke="#777" strokeWidth="1.500" /><circle cx="18.500" cy="19" r="4.500" fill="#5a8c5a" /><path d="M18.500 16.500v5M16 19h5" stroke="#fff" strokeWidth="1.500" /></g>,
  funnel: <Funnel />,
  collapse: <g><TreeMark /><Up /></g>,
  expand: <g><TreeMark /><Down /></g>,
  expandNew: <g><TreeMark /><Down /><path d="M7 1l2 4.500 5 .5-3.500 3 1 5L7 11.500 2.500 14l1-5L0 6l5-.5z" fill="#ffe32e" stroke="#e8a01a" /></g>,
  info: <Info />,
  brush: <g><path d="M1 12l7-4 7 7-7 8z" fill="#f6cf3c" stroke="#c98" /><path d="M2 12l6-3 3 3-6 5z" fill="#e04a4a" /><path d="M6 20l5-6 4 3-6 6z" fill="#e0d040" /><path d="M13 15 23 4" stroke="#c8762a" strokeWidth="3.500" /><path d="M9 10l6 6" stroke="#c8762a" strokeWidth="3.500" /></g>,
  addGroup: <g fill="#f4f4f4" stroke="#667" strokeWidth="1.500"><path d="M1.500 8h12v14h-12z" /><path d="M5 5h12v14H5z" /><path d="M9 2h12v14H9z" /><path d="M14 12V5a1.500 1.500 0 0 1 3 0v8" fill="none" stroke="#34587f" /><Plus /></g>,
  eye: <g><Eye /><path d="M17 18h7l-3.500 4z" fill="#555" /></g>,
  epsilon: <g><path d="M13 4C9 0 3 3 5 7l4 1-4 1c-4 5 3 9 8 5" stroke="#555" strokeWidth="2.200" fill="none" /><path d="M12 14h11v3l-4 3v4h-3v-4l-4-3z" fill="#999" /></g>,
  remove: <g><path d="M2 2h17v18H2z" fill="#f4f4f4" stroke="#777" strokeWidth="1.500" /><rect x="14" y="15" width="10" height="8" rx="1" fill="#e0393e" /><path d="M16 19h6" stroke="#fff" strokeWidth="1.800" /></g>,
  form: <path d="M1 2h22v19H1zM3 7h6M3 13h6M12 5h8v4h-8zM12 12h8v4h-8z" fill="#eee" stroke="#888" strokeWidth="1.800" />,
  printer: <path d="M6 8V2h12v6M2 8h20v9H2zM6 14h12v8H6z" fill="#bbb" stroke="#777" strokeWidth="1.500" />,
  idSelect: <g><path d="M1 2h22v20H1z" fill="none" stroke="#777" strokeWidth="2" strokeDasharray="3 2" /><g transform="scale(.65)"><Info /></g><Cursor /></g>,
  wrench: <Wrench />,
  star: <path d="M12 .8l3.300 7.500 8 .8-6 5.500 1.800 8.200L12 18.500 4.900 22.800l1.800-8.200-6-5.500 8-.8z" fill="#fdea4c" stroke="#c9a40c" />,
  bookmark: <g><Book /><path d="M13 2h5v10l-2.500-3L13 12z" fill="#5c8cc0" /></g>,
  projectHome: <g><path d="M2 3h8l2 2h10v17H2z" fill="#b4e34e" stroke="#777" strokeWidth="1.500" /><path d="M3 16l7-6 11 10" stroke="#fff" strokeWidth="2" fill="none" /><circle cx="14" cy="10" r="4" fill="#1a8a1a" /></g>,
  home: <g><path d="M2 3h8l2 2h10v17H2z" fill="#f2f2f2" stroke="#888" strokeWidth="1.500" /><path d="M6 14l6-6 6 6M8 13v6h8v-6" stroke="#222" strokeWidth="1.700" fill="none" /></g>,
  folder: <path d="M2 3h8l2 2h10v17H2z" fill="#f2f2f2" stroke="#888" strokeWidth="1.500" />,
  gpkg: <Box3D />,
  feather: <Feather />,
  elephant: <Elephant />,
  mssql: <path d="M1 1c8 0 17 5 22 11-5 4-9 5-13 6-3 1-6 3-7 5 2-8 3-14-2-22zM8 3c3 4 3 10 1 15M14 5c3 4 3 8 1 11" fill="#5c8cc0" stroke="#34587f" />,
  db2: <g><rect width="24" height="23" rx="2" fill="#6197cf" /><text x="1.500" y="15" fontSize="10" fontWeight="700" fill="#dbe8f6" fontFamily="Noto Sans, sans-serif">DB2</text></g>,
  globe: <Globe />,
  wcs: <Globe dark />,
  wfs: <g><Globe pale /><g transform="translate(3 3) scale(.75)"><Vee /></g></g>,
  ows: <Globe pale />,
  arcMap: <g><Globe /><path d="M2 14h3v3h2v-4h3v5h2v4H4v-3H1z" fill="#222" /></g>,
  arcFeat: <g><Globe pale /><path d="M4 4l6 2 5-2-3 8-4 3z" fill="#54779c" /><path d="M2 14h3v3h2v-4h3v5h2v4H4v-3H1z" fill="#222" /></g>,
  geonode: <path d="M12 2.500v19M3.500 7l17 10M20.500 7l-17 10" stroke="#5c8cc0" strokeWidth="4.200" strokeLinecap="round" />,
  rasterSm: <g><rect x="1" y="1" width="21" height="21" fill="#b9cbe4" /><path d="M1 1h7v6H1zM15 1h7v6h-7zM8 8h7v7H8zM1 15h7v7H1zM8 0h7v1H8z" fill="#2b4060" /><path d="M8 1h7v6H8zM1 8h7v7H1z" fill="#e8eef7" /></g>,
  float: <g fill="none" stroke="#666" strokeWidth="2"><rect x="1" y="1" width="22" height="22" rx="4" /><path d="M6 11h7v7H6zM10 10V6h8v8h-4" /></g>,
  close: <g fill="none" stroke="#555" strokeWidth="2"><rect x="1" y="1" width="22" height="22" rx="4" /><path d="M7 7l10 10M17 7 7 17" strokeWidth="4" /></g>,
  search: <g fill="none" stroke="#888" strokeWidth="1.800"><circle cx="9.500" cy="9.500" r="7" /><path d="M14.500 14.500 22 22" /></g>,
  extents: <g><path d="M2 6l8 4-6 6 6 5M14 2l-6 6 10 2" stroke="#222" strokeWidth="2.600" fill="none" /><ellipse cx="13" cy="13" rx="5" ry="8" transform="rotate(-40 13 13)" fill="#ddd" stroke="#222" strokeWidth="2" /><circle cx="17" cy="18" r="4.500" fill="#fff" stroke="#222" strokeWidth="1.800" /><path d="M15 5l7-3" stroke="#222" strokeWidth="2" strokeDasharray="2 2" /></g>,
  lock: <g><path d="M6 12V8c0-8 12-8 12 0v4" fill="none" stroke="#777" strokeWidth="2.500" /><rect x="2.500" y="11" width="19" height="12" rx="2" fill="#555" /></g>,
  crs: <g><path d="M12 1C4 1 1 9 1 12h22c0-3-3-11-11-11zM1 12c1 5 6 8 11 11 5-3 10-6 11-11z" fill="#777" /><path d="M1 8h22M1 13h22M4 18h16M12 1v22M7 3c-3 6-2 12 2 18M17 3c3 6 2 12-2 18" stroke="#eee" fill="none" /></g>,
  bubble: <g><ellipse cx="12" cy="11" rx="11.500" ry="9" fill="#555" /><path d="M14 18l6 5v-7z" fill="#555" /><path d="M5.500 9h3v3h-3zM10.500 9h3v3h-3zM15.500 9h3v3h-3z" fill="#eee" /></g>,
};

const Icon = ({ name, size = 24 }) => (
  <svg width={size} height={size} viewBox="0 0 24 24" aria-hidden="true">{ICONS[name]}</svg>
);

const TRIANGLES = { down: 'M0 2h9L4.500 7z', up: 'M0 7h9L4.500 2z', right: 'M2 0v9l5-4.500z', left: 'M7 0v9L2 4.500z' };
const Triangle = ({ dir = 'down', color = '#555', size = 9 }) => (
  <svg width={size} height={size} viewBox="0 0 9 9" aria-hidden="true"><path d={TRIANGLES[dir]} fill={color} /></svg>
);

/* ---------- toolbar data: [icon, name, flags]; d = disabled, m = menu, p = pressed ---------- */

const TOOLBAR_ONE = [
  [['newDoc', 'New Project'], ['open', 'Open Project'], ['save', 'Save Project'], ['layout', 'New Print Layout'], ['layoutMgr', 'Layout Manager'], ['style', 'Style Manager']],
  [['hand', 'Pan Map'], ['panSel', 'Pan to Selection'], ['zoomIn', 'Zoom In'], ['zoomOut', 'Zoom Out'], ['zoomFull', 'Zoom Full'], ['zoomSel', 'Zoom to Selection', 'd'], ['zoomLayer', 'Zoom to Layer'], ['zoomNative', 'Zoom to Native Resolution'], ['zoomLast', 'Zoom Last'], ['zoomNext', 'Zoom Next', 'd'], ['newMap', 'New Map View'], ['newMark', 'New Bookmark'], ['marks', 'Show Bookmarks'], ['refresh', 'Refresh']],
  [['identify', 'Identify Features', 'p'], ['action', 'Run Action', 'dm'], ['select', 'Select Features', 'dm'], ['selectVal', 'Select by Value', 'dm'], ['deselect', 'Deselect Features'], ['table', 'Open Attribute Table', 'd'], ['calc', 'Field Calculator', 'd'], ['gear', 'Processing Toolbox'], ['sum', 'Statistical Summary'], ['measure', 'Measure Line', 'm'], ['tips', 'Show Map Tips'], ['textNote', 'Text Annotation', 'm']],
];

const TOOLBAR_TWO = [
  [['sources', 'Data Source Manager'], ['newGpkg', 'New GeoPackage Layer'], ['newShape', 'New Shapefile Layer'], ['newSpatial', 'New SpatiaLite Layer'], ['newMem', 'New Scratch Layer'], null, ['newVirt', 'New Virtual Layer']],
  [['edits', 'Current Edits', 'd'], ['edit', 'Toggle Editing', 'd'], ['saveEdits', 'Save Layer Edits', 'd'], ['addPt', 'Add Point Feature', 'd'], ['vertex', 'Vertex Tool', 'dm'], ['multi', 'Modify Attributes', 'd'], ['trash', 'Delete Selected', 'd'], ['cut', 'Cut Features', 'd'], ['copy', 'Copy Features', 'd'], ['paste', 'Paste Features', 'd'], ['undo', 'Undo', 'd'], ['redo', 'Redo', 'd']],
  [['label', 'Layer Labeling', 'd'], ['diagram', 'Layer Diagrams', 'd'], null, ['labelPin', 'Highlight Pinned Labels'], ['labelRed', 'Toggle Unplaced Labels'], null, ['labelPin2', 'Pin Labels', 'd'], ['labelEye', 'Show Labels', 'd'], ['labelMove', 'Move Label', 'd'], ['labelTurn', 'Rotate Label', 'd'], ['labelEdit', 'Change Label', 'd']],
  [['metaSearch', 'MetaSearch']],
  [['python', 'Python Console']],
  [['help', 'Help Contents']],
  [],
];

const SIDE_TOOLS = [
  ['addVec', 'Add Vector Layer'], ['addRas', 'Add Raster Layer'], ['addMesh', 'Add Mesh Layer'], ['addCsv', 'Add Delimited Text Layer'], ['addSpl', 'Add SpatiaLite Layer'], ['addVirt', 'Add Virtual Layer'],
  ['addPg', 'Add PostGIS Layer', 'm'], ['addWms', 'Add WMS Layer', 'm'], ['addWcs', 'Add WCS Layer'], ['addWfs', 'Add WFS Layer', 'm'], ['newShape', 'New Layer', 'm'],
];

const MENUS = [['Pro', 'j', 'ect'], ['', 'E', 'dit'], ['', 'V', 'iew'], ['', 'L', 'ayer'], ['', 'S', 'ettings'], ['', 'P', 'lugins'], ['Vect', 'o', 'r'], ['', 'R', 'aster'], ['', 'D', 'atabase'], ['', 'W', 'eb'], ['', 'M', 'esh'], ['Pro', 'c', 'essing'], ['', 'H', 'elp']];

const BROWSER = [
  ['Favorites', 'star'], ['Spatial Bookmarks', 'bookmark', true], ['Project Home', 'projectHome', true], ['Home', 'home', true], ['/', 'folder', true],
  ['GeoPackage', 'gpkg'], ['SpatiaLite', 'feather'], ['PostGIS', 'elephant'], ['MSSQL', 'mssql'], ['DB2', 'db2'], ['WMS/WMTS', 'globe'], ['XYZ Tiles', 'globe', true],
  ['WCS', 'wcs'], ['WFS', 'wfs'], ['OWS', 'ows'], ['ArcGisMapServer', 'arcMap'], ['ArcGisFeatureServer', 'arcFeat'], ['GeoNode', 'geonode'],
];

const LAYERS = [
  { color: '#a1d99b', text: '1743' }, { color: '#74c476', text: '2224' }, { color: '#41ab5d', text: '2705' }, { color: '#238b45', text: '3186' }, { color: '#006d2c', text: '3630' }, { color: '#00441b', text: '4000' },
  { layer: 'maxlinkcapacity_10000', arrow: 'right' },
  { layer: 'populationIsInsideFire_1000_ffdi100a', arrow: 'down' },
  { color: '#000', text: '0' }, { color: '#fff', text: '1' },
  { layer: 'populationIsInsideFire_1000_ffdi100a', arrow: 'right' },
  { layer: 'isInsideFirePerimeter_1000_ffdi100a', arrow: 'right', on: true, selected: true },
  { layer: 'numFiresPopulationIsInside_1000', arrow: 'down', on: true },
  { color: '#000', text: '0' }, { color: '#fff', text: '2' },
  { layer: 'populationArchetypes_1000', arrow: 'down', on: true },
  { color: '#f7fbff', text: '0' }, { color: '#deebf7', text: '132.86' }, { color: '#c6dbef', text: '265.72' }, { color: '#9ecae1', text: '398.58' }, { color: '#6baed6', text: '531.44' }, { color: '#4292c6', text: '664.3' }, { color: '#2171b5' },
];

/* ---------- road network, one group per map sheet ---------- */

const SHEETS = [
  {
    x: 640, y: 150,
    minor: '330,165 348,40|402,48 391,121 445,128|440,180 459,55|526,65 517,122 600,138 660,120|573,95 570,130|686,92 691,75|749,71 790,92|80,185 130,194 207,235 313,285 422,300 440,318 530,405 570,420 640,430|39,230 203,254|85,313 200,328 395,356 435,312 512,262 572,232 690,252 760,255 780,232|100,383 200,360 305,343|66,458 125,464|118,510 126,452 300,470 380,485 420,485 480,472 495,447|190,405 495,447|207,235 133,893|235,470 185,830|316,253 300,345|365,293 345,490 315,728|300,422 280,545|270,625 235,885|165,577 640,640 655,612 765,628 778,650 775,688 750,690|68,591 210,670 375,690 425,748 460,800 485,815 530,855 600,915 648,980|76,643 155,653|85,701 425,747|100,759 248,778|91,814 180,824|100,895 180,893 238,885|425,748 460,525 470,480|395,548 605,548 655,445 720,410|395,548 380,660|385,630 437,636|605,548 600,580 635,597|535,797 560,615 575,540 598,488|590,812 612,630|485,812 535,797 580,808 608,828 660,785 700,745|605,828 600,920|603,860 670,867|485,812 490,850 470,912 488,950 487,998|485,812 415,857 385,857 305,890 270,912 240,960 210,1010 185,1043 170,970 187,905|670,782 850,808 940,818|850,808 862,745 865,725 925,705|912,815 908,900|848,980 862,897 930,903 950,880 975,880|600,980 520,975 487,985 435,1022 350,1120|378,967 450,975|470,912 440,1020|660,967 705,970 703,1010|648,985 710,1010 775,990 870,988 1000,955|590,1050 715,1010|575,1075 600,1082 720,1095 800,1107 880,1160 890,1190|680,1170 705,970|735,1290 770,1005|682,1153 750,1162|775,1020 835,1037 830,1125|895,1090 915,985|875,1160 895,1090 950,1083 1020,1060|950,1085 1000,1140 1000,1170|185,1043 195,1080 220,1140 300,1165 400,1200|187,1075 250,1090 265,1108 360,1108 390,1085 430,1050|285,1050 275,1105 295,1165|185,1043 280,1055 340,1018|185,905 195,965 250,1000 340,1015|265,1168 255,1265 395,1287|330,1110 310,1270|315,1220 410,1210 460,1245|80,1017 130,1048 133,1073 103,1100|127,1050 180,1045|130,1075 128,1145 96,1173|85,1226 140,1232 210,1290|385,1110 385,1160 410,1200 450,1175 480,1150|420,1110 430,1080 465,1075|505,195 480,250 455,275 440,310|512,265 497,375|512,280 685,302 690,270|615,290 600,450|660,300 640,330 610,545|515,195 570,232 620,292|570,185 685,200|645,330 740,340|735,480 735,340|640,425 640,480 680,440|710,110 700,160 740,280|755,130 750,190|865,195 800,215 740,232 700,225|850,455 820,430 760,420|850,455 940,422 1000,425|850,455 810,570|760,545 870,578 950,590|870,558 868,600|920,655 983,655 980,690 960,712|655,612 652,690 640,768 665,768 690,720 695,680|650,690 670,720|755,905 745,985|788,885 775,990|785,120 840,90|750,1095 752,1200 830,1210 840,1270|755,1180 810,1170|640,1268 765,1262|460,1245 500,1215 530,1190|480,1290 530,1265 600,1268',
    purple: '98,515 120,509 250,527 285,543 340,541 397,547 400,521 530,432 570,420 640,427 728,393 805,405 825,396 920,399 955,357 1015,345|750,535 740,600 695,750 688,825 672,870 660,965 648,982 625,988 605,1010 590,1050 560,1085 530,1098 495,1098 487,1115|105,725 210,865 295,942 322,957 328,990 345,1020 370,1032 430,1047 470,1068 490,1115 488,1145 540,1187 600,1263 635,1270 665,1290|480,1155 465,1245 443,1290',
    pink: '88,131 505,193 533,180 572,187 625,140 665,143',
    red: '660,95 673,118 663,165 688,270 715,300 735,303 750,325 761,370 755,400 747,490 752,530 800,575 878,640 905,658 925,690|673,118 915,142 930,160 950,190 980,210',
    towns: [[490, 1085, 26, 20, 60], [185, 1045, 14, 20, 20], [205, 1085, 14, 26, 12], [910, 165, 26, 20, 44], [865, 180, 16, 26, 18], [482, 1148, 16, 14, 18], [760, 548, 22, 16, 26], [680, 105, 14, 12, 20], [840, 325, 24, 20, 10], [920, 1230, 60, 60, 50], [890, 745, 26, 18, 8], [820, 470, 30, 60, 12], [720, 360, 40, 40, 8], [660, 640, 40, 40, 8], [985, 300, 26, 60, 160], [985, 375, 35, 20, 100], [1000, 410, 20, 24, 34], [965, 195, 20, 30, 24], [950, 110, 60, 20, 12]],
  },
  {
    x: 950, y: 150,
    minor: '700,143 705,120 752,90|640,145 630,270|608,160 690,210|590,210 592,188 640,190|550,390 690,210 780,170|580,370 650,255 820,160 848,200|770,172 850,290 820,340 790,355 755,300 745,250|790,355 830,390 785,490|790,355 750,445|792,150 810,172|640,145 670,165 710,170|620,310 675,312|655,315 633,410|685,355 650,405|635,430 750,442|575,360 608,380 590,525|105,345 110,400 145,438 210,405|120,390 190,440 270,455|350,435 570,465 568,485|240,405 500,425|150,300 155,430|430,310 410,510|450,415 440,500|500,420 470,600 462,618 430,615|545,400 515,630 440,730 415,745|385,508 620,528 700,610 750,665 835,685 852,682|600,480 630,482 685,525 745,528 775,490|700,470 703,525|385,405 390,510 370,545 335,545 335,590 300,630 305,840|305,735 410,735|440,728 540,742|190,440 200,530 215,590 205,660 250,725 300,630|200,535 240,510 290,510 335,545|195,470 245,480 270,440 285,510|200,500 250,455|130,537 205,537 240,520|405,740 415,745 400,840 395,890 380,920 430,1000 430,1035 445,1075 455,1185 480,1225 485,1290|430,510 430,620 437,670 540,685 565,740 585,770 585,800 510,940 410,958|585,795 655,845 715,852 785,842 795,895 815,910|565,840 597,842 600,885 628,928 690,925 730,930 760,960 750,1010 725,1040 690,1240 693,1290|628,928 580,975 555,1180 530,1225 512,1290|380,1113 515,1047 715,1112 750,1108 785,1125 805,1105 850,1110 880,1128|555,1137 375,1113 345,1080 315,1000 205,1000 110,990|315,1000 325,940 350,920 380,920|430,995 380,970 320,998|315,780 345,780 398,822|150,770 210,840 250,850 300,815|185,765 182,810|205,850 205,940 215,1000 190,1165|205,905 245,925|400,855 500,865|450,810 452,860|450,825 500,825|395,890 430,893|445,1075 350,1215 335,1225 270,1280|335,1225 350,1290|275,1005 290,1100 280,1180 335,1225|530,555 560,580 600,625 620,625 650,690|590,525 605,590 670,630 690,600 685,570 655,565|695,615 690,690 668,745|620,685 690,692|655,650 690,655|20,1085 50,1065 120,1060|20,1085 65,1135 68,1165|0,975 90,950|790,1235 790,1270 800,1290|155,1055 210,1060|155,1090 210,1092|160,1112 235,1118 258,1137|370,250 375,290 440,300 540,290 565,245|460,240 470,290|390,270 430,310|565,250 568,300 540,345|300,630 340,640|220,570 290,580 300,620|225,570 245,650|125,990 130,940|150,990 152,938|165,990 172,920|240,400 275,360 270,320|285,365 300,390 350,385|470,210 505,200 505,225|700,400 740,410 760,375|840,550 805,592|125,1165 180,1170 225,1235 220,1290|0,1240 215,1240 240,1190|785,485 850,492|720,420 750,400|510,230 490,200',
    purple: '155,110 200,105 275,95|165,120 195,165|308,90 310,135 290,157 312,180 308,240 300,292 325,315 355,312 375,328 415,378 550,398 635,412 680,435 700,468 785,482 800,492 840,548 872,552|100,280 115,287 155,291 175,280 187,240 180,210|95,215 105,180 125,155|852,685 854,705 863,720 840,850 813,890 813,910 835,940 849,970|140,1065 148,1085|60,345 85,343',
    pink: '335,205 380,238 445,255 565,246 650,254 740,270 830,293 852,290 895,320',
    red: '275,92 250,140 215,185 160,200|30,203 55,213 100,208 130,200 150,190|110,1110 100,1160 75,1215 35,1285|265,250 285,265|180,225 215,210',
    coral: '130,165 137,190 205,195 335,205',
    orange: '190,205 150,243 115,270 97,300 88,345 78,400 70,430 78,485 48,520 42,560 10,625 -8,690 10,740 28,830 50,910 90,985 115,1030 123,1080 110,1140 118,1160 165,1197 190,1240 217,1290',
    towns: [[210, 170, 100, 80, 900], [270, 230, 55, 62, 420], [170, 250, 70, 45, 260], [80, 285, 35, 50, 110], [235, 320, 32, 55, 100], [60, 330, 25, 50, 90], [60, 390, 25, 30, 70], [85, 470, 16, 40, 12], [395, 360, 30, 24, 70], [430, 375, 40, 26, 36], [410, 270, 40, 40, 30], [515, 265, 50, 35, 30], [130, 110, 30, 18, 70], [140, 1115, 16, 50, 60], [190, 570, 40, 50, 12], [60, 1215, 70, 60, 46], [25, 730, 16, 20, 6], [215, 1110, 30, 40, 8], [240, 600, 30, 50, 12], [450, 440, 60, 60, 10], [230, 95, 70, 8, 24], [760, 385, 20, 25, 6]],
  },
  {
    x: 640, y: 570,
    minor: '80,267 118,276 104,368 175,377|118,276 160,268 260,258 325,243|220,262 182,315 175,405 195,440 182,470 180,530 155,615|195,440 270,402 330,342 345,255|285,380 330,395 410,408|205,178 215,70 170,0|205,40 220,90 267,168 257,258|280,60 310,72 400,65 430,45 470,15 500,20 530,5|253,0 265,10 365,22 400,40 430,42|345,133 420,122|360,160 370,140 420,130|390,178 420,178|410,65 408,120|547,160 522,260|345,265 455,278|388,238 420,260|650,230 645,265 690,275 697,320 828,333|420,350 515,360 560,402 630,407 710,430 780,437|555,402 553,430 600,430|460,420 520,428|600,410 578,430 568,475 550,478|415,508 467,497|405,505 435,545|370,583 425,645 490,665 535,650 585,652|490,665 485,720 430,725 385,685 325,628|325,630 320,730 365,770 365,800 410,850 407,895|320,690 362,690 370,660|340,690 335,735|320,730 272,740 232,758 165,720 140,665 120,655|430,715 440,700 487,695|485,720 475,765 485,795 425,832 410,850|460,730 432,800 430,830|333,793 365,800|140,860 195,868 250,895 320,905 383,917|730,485 730,515 690,545 660,585 655,610 600,675|660,590 667,627|715,660 680,690 640,740 627,790 633,880 618,900 657,937|555,540 540,600 535,690|555,620 548,720|525,570 540,570|590,740 615,742|617,703 625,725|780,470 785,518|708,832 750,838 775,858 777,935|725,885 755,880|740,570 772,590|695,0 685,250|738,0 705,220|650,70 780,88|673,157 830,180 850,195|540,320 540,350|580,240 580,300 615,300|775,335 778,360|828,420 830,490 820,520|835,425 870,490 925,490 920,630 900,660 902,710 925,755 900,785 885,835 880,935 892,960 865,1015 860,1060 835,1072 823,1130|905,405 925,460 990,455 1010,530 1010,620 1040,690 1015,785 975,840 982,915 998,977|975,840 962,790|975,865 1030,860|990,445 1060,390|780,437 830,420 905,400 950,395|960,370 1000,420|905,235 950,320 960,370 940,395|945,330 1000,280 1055,280|1025,170 1020,250|850,360 910,345 915,320 890,290|1055,200 1055,300 1080,380|1010,620 1045,630 1080,675|1040,690 1080,695|1000,450 1080,510|990,455 990,490|840,340 880,380 900,405|835,232 905,230',
    purple: '458,0 437,45 422,90 422,135 445,170 487,215 487,240 455,280 420,345 410,410 415,490 380,535 370,583 340,618 325,627 285,617 230,611 210,619 140,618 125,632 117,703|455,280 485,325 520,375 520,430 550,485 567,575 568,620 597,680 605,720 640,770 700,825|597,0 640,15 680,45 760,57 790,90 820,123|108,827 140,860 165,872 162,933',
    pink: '100,183 135,194 195,180 240,178 275,188 325,243 405,256 455,280 480,268 523,264 580,275 605,260 625,240 650,228 708,219 770,175 820,125|820,125 900,125|945,118 1000,132',
    red: '980,0 955,40 945,115 905,140 905,215 870,265 845,285 828,350 798,395 793,430 770,470 732,512 740,605 720,640 715,700 697,770 697,815 708,832 705,870 735,900 750,930 780,943 787,970 787,1005 798,1065 786,1087 799,1130 768,1160 745,1157 725,1163 695,1154 685,1165 675,1192 660,1203 642,1198 630,1222 613,1214 570,1230 525,1226 505,1232 477,1230 383,1290',
    towns: [[945, 90, 30, 28, 150], [900, 190, 30, 34, 44], [890, 115, 40, 16, 40], [1045, 395, 26, 26, 26], [480, 290, 30, 22, 32], [458, 305, 16, 14, 22], [785, 437, 16, 14, 30], [900, 30, 60, 40, 54], [1000, 60, 60, 50, 54], [1020, 150, 60, 24, 56], [418, 124, 14, 14, 12], [122, 648, 8, 10, 14], [835, 320, 14, 22, 10], [785, 140, 24, 18, 10], [880, 300, 30, 50, 12], [545, 690, 18, 24, 6]],
  },
  {
    x: 980, y: 570,
    minor: '180,0 205,75 240,200|190,5 225,110 265,118|265,55 253,150|150,30 205,0|265,55 400,87 450,100 530,150|395,0 400,87 370,150 345,190|430,0 425,30 400,87|605,0 605,25 580,60 577,92 535,135 527,185 555,245 535,280 530,310 512,340 445,372 377,380|377,380 408,432 420,435 420,462 690,495|500,135 525,170|500,135 535,135|447,178 490,173 527,185|215,148 370,175 447,178|205,150 125,162 105,185 60,170|555,245 610,295 640,285 662,300 667,410|555,245 600,330 605,375 627,380 615,500 605,523 585,545 582,600 615,635|700,0 710,50 700,120 560,230|710,50 745,55 765,48|787,50 770,90 772,145 745,190 800,200 760,240 735,290 735,350 675,410 630,405|662,320 690,315 715,325 735,300|675,400 725,420 805,430|675,410 665,490|508,340 505,410|450,470 445,560|500,415 630,433|490,530 600,545|510,590 582,600|605,600 760,620|690,495 680,580 655,760|635,550 740,565|650,623 760,635|700,650 758,650|705,675 752,680|610,605 605,760|740,560 735,620|165,260 205,252 285,250|165,260 175,310 232,405 300,385 330,375|175,310 125,330 110,365 0,350|120,347 160,370 215,370|205,275 220,262 270,262|240,262 240,285|265,265 255,290 290,340 310,380|235,312 265,315|300,345 345,350|340,280 390,288|345,340 390,343|357,238 345,375|335,395 300,410 280,450 278,475 253,510 258,560 250,625 270,635 330,627 365,625|330,435 285,452 360,453|250,580 243,665|220,605 250,607|310,455 320,490 318,503|358,510 410,525|0,470 60,512 95,500 140,507 157,610 185,640|110,655 150,650 325,675|185,645 180,680 140,705|45,580 75,590 105,620 108,655 70,695 95,730 100,805 190,800|0,640 15,690 70,695|190,705 285,720|190,755 187,850 210,855|295,655 290,730 305,762 355,750 390,765 460,752 530,765|305,762 320,810 350,835 388,815 390,765|320,810 310,850|388,830 365,870 348,980|355,840 295,895 293,925|190,780 285,790|360,685 357,715 372,720 370,750|328,728 326,752|410,720 405,760|440,650 438,690 460,730|455,590 475,620 462,750 450,815 430,822|440,650 460,610|470,700 520,705|450,780 530,785 560,820|450,815 600,830|498,880 630,885|498,880 495,940 485,950|560,770 555,880|600,790 597,860|530,640 545,700|740,725 735,830|770,755 830,710 930,680|720,785 930,817|720,820 805,828|720,825 750,860 720,880|105,60 135,45|95,50 95,100|155,65 180,110 178,128|150,95 160,110|108,105 150,160|130,140 155,140|160,130 180,128|60,225 80,240|115,185 150,208|150,220 175,225 172,210|205,125 265,230|215,180 240,185|515,245 515,260 550,265|335,110 325,150 330,220|240,185 320,190|230,200 310,208|575,660 575,710|600,670 645,680|550,570 565,570|0,640 45,580',
    purple: '300,275 310,335 320,370 335,400 357,480 360,535 390,570 500,585|262,215 275,240 300,275|390,585 360,640 300,720 250,800 177,912|815,212 826,237 825,290 805,430 712,560 703,620 685,770|650,775 628,948|535,700 540,745 610,780 650,790 715,845',
    pink: '0,150 45,168 80,172 95,185 120,187 155,237 200,262 245,245 265,210|255,205 290,212 265,222|290,245 302,280 300,300',
    orange: '112,0 135,38 170,60 215,130 250,200 275,212 345,222 380,238 420,285 440,330 452,380 453,400 483,445 472,500 473,525 500,590 525,660 540,700 570,712 605,720 635,745 655,765 690,782 706,800 705,850 735,895 770,935 800,975 835,1015 852,1050 875,1078 928,1085',
    towns: [[640, 790, 26, 30, 120], [685, 805, 22, 20, 120], [398, 572, 15, 12, 24], [450, 575, 24, 12, 34], [325, 385, 14, 14, 30], [50, 180, 30, 24, 30], [20, 30, 40, 40, 36], [555, 247, 12, 12, 12], [275, 280, 14, 24, 12], [30, 390, 22, 22, 18], [460, 610, 14, 18, 8], [415, 760, 24, 8, 8], [620, 850, 30, 30, 14], [700, 720, 36, 30, 12], [570, 690, 24, 24, 6], [365, 388, 12, 8, 20], [470, 765, 16, 20, 4]],
  },
];

const STROKES = { purple: '#7b2382', pink: '#c83e73', red: '#e95562', coral: '#f9795d', orange: '#fea973' };

/* burnt cells as "top bottom left right" on the fire raster */
const FIRE = '33 67 102 137|67 171 102 205|67 101 549 581|101 135 515 581|135 171 481 581|171 205 102 240|171 205 447 549|188 341 69 102|205 238 102 273|205 238 447 549|238 272 102 308|238 272 342 360|238 272 447 581|272 307 102 308|272 341 377 549|307 341 102 342|341 376 102 515|376 410 102 342|376 410 377 515|410 444 102 481|444 513 102 447|513 581 102 411|581 615 137 411|581 650 472 515|615 650 171 411|615 650 447 481|650 685 205 377|650 685 447 549|685 719 205 377|685 719 411 515|719 753 240 481|753 787 273 481|787 821 273 447|821 857 308 411|821 857 447 481|857 891 342 447|891 925 377 481|925 959 411 481|959 992 411 447|410 444 618 650|444 548 583 618|548 650 549 581';

const randomizer = (seed) => () => {
  seed = (seed * 1103515245 + 12345) % 2147483648;
  return seed / 2147483648;
};

/* short streets laid on a slightly turned grid inside an ellipse */
const streets = ([cx, cy, rx, ry, count], seed) => {
  const rnd = randomizer(seed);
  let d = '';
  for (let i = 0; i < count; i += 1) {
    const a = rnd() * Math.PI * 2;
    const r = Math.sqrt(rnd());
    const x = cx + Math.cos(a) * rx * r;
    const y = Math.max(cy + Math.sin(a) * ry * r, 80);
    const t = 0.14 + (rnd() < 0.5 ? 0 : Math.PI / 2) + (rnd() < 0.25 ? 0.7 : 0);
    const len = 8 + rnd() * 14;
    d += `M${Math.round(x)} ${Math.round(cy < 80 ? cy + Math.sin(a) * ry * r : y)}l${Math.round(Math.cos(t) * len)} ${Math.round(Math.sin(t) * len)}`;
  }
  return d;
};

const toPath = (lines) => lines.split('|').map((l) => `M${l}`).join('');

const RoadMap = () => (
  <svg viewBox="538 139 868 882" role="img" aria-label="Map of road flows and fire perimeter">
    <rect x="682" y="180" width="607" height="813" fill="#000" />
    <g transform="translate(980 570) scale(.33333)" fill="#fff" shapeRendering="crispEdges">
      {FIRE.split('|').map((cell) => {
        const [top, bottom, left, right] = cell.split(' ').map(Number);
        return <rect key={cell} x={left} y={top} width={right - left} height={bottom - top} />;
      })}
    </g>
    {SHEETS.map((s, i) => (
      <g key={i} transform={`translate(${s.x} ${s.y}) scale(.33333)`} fill="none" stroke="#140e36" strokeWidth="6.500" strokeLinejoin="round">
        <path d={toPath(s.minor)} />
        {s.towns.map((t, k) => <path key={k} d={streets(t, i * 97 + k * 13 + 7)} strokeWidth="5" />)}
      </g>
    ))}
    {Object.keys(STROKES).map((kind) => SHEETS.filter((s) => s[kind]).map((s) => (
      <g key={kind + s.x + s.y} transform={`translate(${s.x} ${s.y}) scale(.33333)`} fill="none" strokeLinejoin="round">
        <path d={toPath(s[kind])} stroke={STROKES[kind]} strokeWidth="6" />
        <path d={toPath(s[kind])} stroke="#140e36" strokeWidth="5" strokeDasharray="4 44 3 78 4 29 3 120" />
      </g>
    )))}
    <g fill="none" stroke="#140e36" strokeWidth="2" strokeDasharray="2 5 3 9">
      <path d="M962 216L984 206 1008 210M863 180L866 204M1058 218L1100 280M914 612L940 612" />
    </g>
    <path d="M1065 638l12 2-10 5zM1242 891l9 7-2 4-8-6zM1142 764l8 0 0 9zM1203 824l8 4 0 4z" fill="#c83e73" />
  </svg>
);

/* ---------- composed parts ---------- */

const Tools = ({ groups }) => (
  <Toolbar role="toolbar">
    {groups.map((items, i) => (
      <Group key={i}>
        <Grip />
        {items.map((it, k) => {
          if (!it) return <Separator key={k} />;
          const [icon, name, flags = ''] = it;
          return (
            <ToolButton key={icon} aria-label={name} title={name} disabled={flags.includes('d')} $menu={flags.includes('m')} $pressed={flags.includes('p')}>
              <Icon name={icon} />
              {flags.includes('m') && <Triangle />}
            </ToolButton>
          );
        })}
      </Group>
    ))}
  </Toolbar>
);

const DockHeader = ({ title, edge }) => (
  <DockTitle $edge={edge}>
    <h2>{title}</h2>
    <button aria-label={`Float ${title}`}><Icon name="float" size={12} /></button>
    <button aria-label={`Close ${title}`}><Icon name="close" size={12} /></button>
  </DockTitle>
);

const SmallTools = ({ items }) => (
  <DockTools role="toolbar">
    {items.map((it, k) => {
      if (!it) return <Separator key={k} $small />;
      const [icon, name, flags = ''] = it;
      return (
        <SmallButton key={icon} aria-label={name} title={name} disabled={flags.includes('d')} $menu={flags.includes('m')}>
          <Icon name={icon} size={16} />
          {flags.includes('m') && <Triangle size={8} />}
        </SmallButton>
      );
    })}
  </DockTools>
);

const LayerRow = ({ item, id }) => {
  if (!item.layer) {
    return <Row $legend><Swatch $color={item.color} />{item.text && <span>{item.text}</span>}</Row>;
  }
  return (
    <Row $selected={item.selected}>
      <ArrowSlot><Triangle dir={item.arrow} size={8} color={item.selected ? '#123c58' : '#555'} /></ArrowSlot>
      <CheckBox id={id} defaultChecked={item.on} />
      <RowIcon $layer><Icon name="rasterSm" size={14} /></RowIcon>
      <LayerLabel htmlFor={id} $off={!item.on} $selected={item.selected}>{item.layer}</LayerLabel>
      <Indicator />
    </Row>
  );
};

const SpinBox = ({ id, value, name }) => (
  <Spin>
    <input id={id} defaultValue={value} />
    <SpinButtons>
      <button aria-label={`Increase ${name}`}><Triangle dir="up" size={8} /></button>
      <button aria-label={`Decrease ${name}`}><Triangle size={8} /></button>
    </SpinButtons>
  </Spin>
);

export default function App() {
  return (
    <Window>
      <Global />
      <TitleBar>
        <WindowTitle>*qgisstaticevacMtAlexanderproj - QGIS</WindowTitle>
        <WindowButtons>
          <WindowButton aria-label="Minimize"><svg width="10" height="10"><path d="M1 7.500h8" stroke="#fff" /></svg></WindowButton>
          <WindowButton aria-label="Restore"><svg width="10" height="10"><path d="M1.500 3.500h5v5h-5zM3.500 1.500h5v5" stroke="#fff" fill="none" /></svg></WindowButton>
          <WindowButton $close aria-label="Close"><svg width="10" height="10"><path d="M1.500 1.500l7 7M8.500 1.500l-7 7" stroke="#fff" strokeWidth="1.500" /></svg></WindowButton>
        </WindowButtons>
      </TitleBar>
      <MenuBar>
        {MENUS.map(([a, b, c]) => <MenuItem key={a + b + c}>{a}<u>{b}</u>{c}</MenuItem>)}
      </MenuBar>
      <Tools groups={TOOLBAR_ONE} />
      <Tools groups={TOOLBAR_TWO} />

      <Main>
        <SideBar role="toolbar">
          <SideGrip><Grip $wide /></SideGrip>
          {SIDE_TOOLS.map(([icon, name, menu]) => (
            <SideButton key={icon} aria-label={name} title={name}>
              <Icon name={icon} />
              {menu && <Triangle size={8} />}
            </SideButton>
          ))}
        </SideBar>

        <LeftDocks>
          <Dock>
            <DockHeader title="Browser" />
            <SmallTools items={[['addLayer', 'Add Selected Layers'], ['refresh', 'Refresh Browser'], ['funnel', 'Filter Browser'], ['collapse', 'Collapse All'], ['info', 'Properties']]} />
            <Panel as="ul" $pad>
              {BROWSER.map(([name, icon, children]) => (
                <Row key={name}>
                  <ArrowSlot>{children && <Triangle dir="right" size={8} />}</ArrowSlot>
                  <RowIcon><Icon name={icon} size={16} /></RowIcon>
                  <span>{name}</span>
                </Row>
              ))}
            </Panel>
          </Dock>
          <Splitter><Grip $wide /></Splitter>
          <Dock $grow>
            <DockHeader title="Layers" />
            <SmallTools items={[['brush', 'Layer Styling'], ['addGroup', 'Add Group'], ['eye', 'Manage Map Themes'], ['funnel', 'Filter Legend'], ['epsilon', 'Filter by Expression', 'dm'], ['expand', 'Expand All'], ['collapse', 'Collapse All Layers'], ['remove', 'Remove Layer']]} />
            <LayerPanel $grow>
              <LayerTree>
                {LAYERS.map((item, i) => <LayerRow key={i} item={item} id={`layer-${i}`} />)}
              </LayerTree>
              <ScrollV>
                <ScrollEnd aria-label="Scroll up"><Triangle dir="up" size={8} /></ScrollEnd>
                <ScrollTrack $vertical $share={167} />
                <ScrollTrack $vertical $share={70} $thumb />
                <ScrollTrack $vertical $share={150} />
                <ScrollEnd aria-label="Scroll down"><Triangle size={8} /></ScrollEnd>
              </ScrollV>
              <ScrollH>
                <ScrollEnd aria-label="Scroll left"><Triangle dir="left" size={8} /></ScrollEnd>
                <ScrollTrack $share={330} $thumb />
                <ScrollTrack $share={105} />
                <ScrollEnd aria-label="Scroll right"><Triangle dir="right" size={8} /></ScrollEnd>
              </ScrollH>
              <Corner />
            </LayerPanel>
          </Dock>
        </LeftDocks>

        <Canvas><RoadMap /></Canvas>

        <RightDock>
          <DockHeader title="Identify Results" edge />
          <SmallTools items={[['form', 'View Feature Form', 'd'], null, ['expand', 'Expand Tree'], ['collapse', 'Collapse Tree'], ['expandNew', 'Expand New Results'], null, ['deselect', 'Clear Results'], null, ['copy', 'Copy Feature', 'd'], ['printer', 'Print Response', 'd'], null, ['idSelect', 'Identify by Area', 'm'], ['wrench', 'Identify Settings']]} />
          <Panel $grow>
            <Results>
              <colgroup><col width="212" /><col /></colgroup>
              <thead><tr><th scope="col">Feature</th><th scope="col">Value</th></tr></thead>
              <tbody>
                <ResultRow>
                  <td><TreeCell $depth={0}><Triangle size={8} />0</TreeCell></td>
                  <td>populationIsInsideFire_1000_…</td>
                </ResultRow>
                <ResultRow $selected>
                  <td><TreeCell $depth={1}><Triangle size={8} color="#123c58" />populationIsInsideFir…</TreeCell></td>
                  <td />
                </ResultRow>
                <ResultRow>
                  <td><TreeCell $depth={2}><Triangle size={8} color="transparent" />Band 1</TreeCell></td>
                  <td>-1</td>
                </ResultRow>
                <ResultRow $alt>
                  <td><TreeCell $depth={2}><Triangle dir="right" size={8} />(Derived)</TreeCell></td>
                  <td />
                </ResultRow>
              </tbody>
            </Results>
          </Panel>
          <Form>
            <FormRow>
              <Field $grow>
                <label htmlFor="mode">Mode</label>
                <SelectBox>
                  <select id="mode"><option>Current layer</option></select>
                  <span><Triangle size={8} /></span>
                </SelectBox>
              </Field>
            </FormRow>
            <FormRow>
              <Field>
                <label htmlFor="view">View</label>
                <SelectBox $width="86px">
                  <select id="view"><option>Tree</option></select>
                  <span><Triangle size={8} /></span>
                </SelectBox>
              </Field>
              <PushButton>Help</PushButton>
            </FormRow>
          </Form>
        </RightDock>
      </Main>

      <StatusBar>
        <Locator>
          <Icon name="search" size={14} />
          <input placeholder="Type to locate (Ctrl+K)" aria-label="Type to locate" />
        </Locator>
        <Message>1 legend entries removed.</Message>
        <StatusItem>
          <label htmlFor="coord">Coordinate</label>
          <StatusInput id="coord" $width="132px" $center defaultValue="2393944,2488766" />
          <StatusButton aria-label="Toggle extents"><Icon name="extents" size={16} /></StatusButton>
        </StatusItem>
        <StatusItem $before={12}>
          <label htmlFor="scale">Scale</label>
          <SelectBox $edit $width="97px">
            <select id="scale"><option>1:330489</option></select>
            <span><Triangle /></span>
          </SelectBox>
        </StatusItem>
        <StatusItem $before={12}>
          <StatusButton aria-label="Lock scale"><Icon name="lock" size={14} /></StatusButton>
        </StatusItem>
        <StatusItem $before={8}>
          <label htmlFor="magnifier">Magnifier</label>
          <SpinBox id="magnifier" value="100%" name="magnifier" />
        </StatusItem>
        <StatusItem $gap={8}>
          <label htmlFor="rotation">Rotation</label>
          <SpinBox id="rotation" value="0.0 °" name="rotation" />
        </StatusItem>
        <StatusItem $before={6}>
          <StatusCheck id="render" defaultChecked />
          <label htmlFor="render">Render</label>
        </StatusItem>
        <StatusButton $before={16}><Icon name="crs" size={15} />EPSG:3111</StatusButton>
        <StatusButton $before={22} aria-label="Messages"><Icon name="bubble" size={16} /></StatusButton>
      </StatusBar>
    </Window>
  );
}
